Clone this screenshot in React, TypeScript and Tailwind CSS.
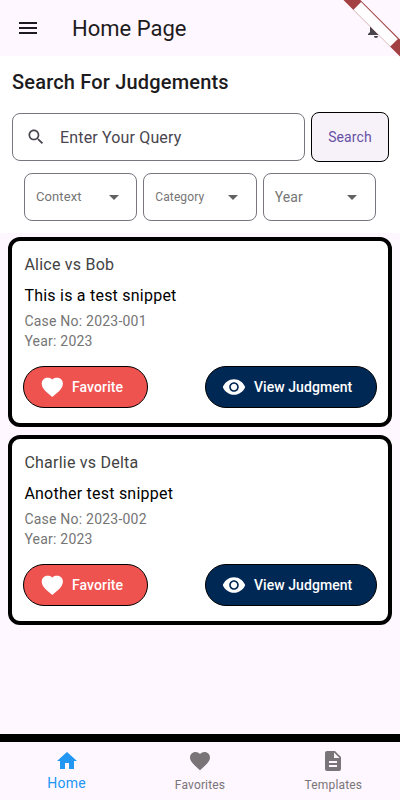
import React from "react";

const paths = {
  menu: "M3 18h18v-2H3v2zm0-5h18v-2H3v2zm0-7v2h18V6H3z",
  bell: "M12 22c1.1 0 2-.9 2-2h-4c0 1.1.89 2 2 2zm6-6v-5c0-3.07-1.64-5.64-4.5-6.32V4c0-.83-.67-1.5-1.5-1.5s-1.5.67-1.5 1.5v.68C7.63 5.36 6 7.92 6 11v5l-2 2v1h16v-1l-2-2z",
  search: "M15.5 14h-.79l-.28-.27C15.41 12.59 16 11.11 16 9.5 16 5.91 13.09 3 9.5 3S3 5.91 3 9.5 5.91 16 9.5 16c1.61 0 3.09-.59 4.23-1.57l.27.28v.79l5 4.99L20.49 19l-4.99-5zm-6 0C7.01 14 5 11.99 5 9.5S7.01 5 9.5 5 14 7.01 14 9.5 11.99 14 9.5 14z",
  caret: "M7 10l5 5 5-5z",
  heart: "M12 21.35l-1.45-1.32C5.4 15.36 2 12.28 2 8.5 2 5.42 4.42 3 7.5 3c1.74 0 3.41.81 4.5 2.09C13.09 3.81 14.76 3 16.5 3 19.58 3 22 5.42 22 8.5c0 3.78-3.4 6.86-8.55 11.54L12 21.35z",
  roundHeart: "M12.3 21.9C8 18.2 1.7 14.3 1.7 8.6C1.7 5.2 4.2 2.7 7.3 2.7C9.3 2.7 11.2 3.1 12.3 4.4C13.4 3.1 15.3 2.7 17.3 2.7C20.5 2.7 22.9 5.2 22.9 8.6C22.9 14.3 16.6 18.2 12.3 21.9z",
  eye: "M12 4.2C7 4.2 2.6 7.4.8 12c1.8 4.6 6.2 7.8 11.2 7.8s9.4-3.2 11.2-7.8C21.4 7.4 17 4.2 12 4.2zM12 16.800c-2.650 0-4.800-2.150-4.800-4.800s2.150-4.800 4.800-4.800 4.800 2.150 4.800 4.800-2.150 4.800-4.800 4.800zm0-8c-1.770 0-3.2 1.43-3.2 3.2s1.43 3.2 3.2 3.2 3.2-1.43 3.2-3.2-1.430-3.2-3.2-3.2z",
  home: "M10 20v-6h4v6h5v-8h3L12 3 2 12h3v8z",
  doc: "M14 2H6c-1.1 0-1.99.9-1.99 2L4 20c0 1.1.89 2 1.99 2H18c1.1 0 2-.9 2-2V8l-6-6zm2 16H8v-2h8v2zm0-4H8v-2h8v2zm-3-5V3.5L18.5 9H13z",
};

function Icon({ name, className }: { name: keyof typeof paths; className: string }) {
  return (
    <svg viewBox="0 0 24 24" fill="currentColor" className={`shrink-0 ${className}`}>
      <path d={paths[name]} />
    </svg>
  );
}

function Filter({ label, size }: { label: string; size: string }) {
  return (
    <div className="flex h-12 flex-1 items-center justify-between rounded-[8px] border border-[#79747e] pr-[10.5px] pl-[11px] text-[#757575]">
      <span className={size}>{label}</span>
      <Icon name="caret" className="size-6 text-[#616161]" />
    </div>
  );
}

function CaseCard({ title, snippet, no }: { title: string; snippet: string; no: string }) {
  return (
    <article className="h-[190px] rounded-[12px] border-4 border-black bg-white px-[11px] pt-[12px]">
      <h2 className="pl-[1.4px] text-[16px] leading-6 tracking-[0.23px] text-[#424242]">{title}</h2>
      <p className="mt-[7px] pl-[1.4px] text-[16px] leading-6 tracking-[0.23px] text-black">{snippet}</p>
      <p className="mt-[3px] pl-[1.4px] text-[14px] leading-5 tracking-[0.22px] text-[#757575]">Case No: {no}</p>
      <p className="pl-[1.4px] text-[14px] leading-5 tracking-[0.22px] text-[#757575]">Year: 2023</p>
      <div className="mt-[15px] flex justify-between">
        <button className="flex h-[42px] w-[124.5px] items-center rounded-full border border-black bg-[#ef5350] pl-[16px] text-[14px] font-medium tracking-[0.1px] text-white">
          <Icon name="roundHeart" className="size-6" />
          <span className="ml-2">Favorite</span>
        </button>
        <button className="flex h-[42px] w-[172.5px] items-center rounded-full border border-black bg-[#002855] pl-[16.5px] text-[14px] font-medium tracking-[0.06px] text-white">
          <Icon name="eye" className="size-6" />
          <span className="ml-2">View Judgment</span>
        </button>
      </div>
    </article>
  );
}

export default function App() {
  return (
    <div className="relative flex h-[800px] w-[400px] flex-col overflow-hidden bg-[#fef7ff] font-['Roboto',sans-serif] text-[#1d1b20]">
      <header className="flex h-14 items-center pr-[12px] pl-4">
        <Icon name="menu" className="size-6" />
        <h1 className="ml-8 flex-1 pt-px text-[22px] leading-7">Home Page</h1>
        <Icon name="bell" className="size-6 text-[#49454f]" />
      </header>
      <svg className="absolute top-0 right-0 size-[60px]" viewBox="0 0 60 60">
        <g transform="translate(60 0) rotate(45)">
          <rect x="-40" y="28" width="80" height="12" fill="#a34041" />
          <rect x="-26" y="29" width="52" height="10.8" fill="#fff" />
        </g>
      </svg>
      <section className="h-[177px] bg-white pt-3">
        <h2 className="pl-3 text-[20px] leading-7 font-medium tracking-[0.18px]">Search For Judgements</h2>
        <div className="mt-[16px] flex items-center pl-3">
          <div className="flex h-12 w-[292.5px] items-center rounded-[8px] border border-[#79747e] pl-[13.4px] text-[16px] tracking-[0.16px] text-[#49454f]">
            <Icon name="search" className="size-5" />
            <span className="ml-[13.6px] pt-[2px]">Enter Your Query</span>
          </div>
          <button className="ml-[6.5px] h-[50px] w-[78px] rounded-[8px] border border-black bg-[#f7f2fa] text-[14px] tracking-[0.1px] text-[#6750a4]">Search</button>
        </div>
        <div className="mt-[11px] flex gap-[6px] px-6">
          <Filter label="Context" size="text-[13px] tracking-[0.1px]" />
          <Filter label="Category" size="text-[12px] tracking-[0.1px]" />
          <Filter label="Year" size="text-[14px] tracking-[0.15px]" />
        </div>
      </section>
      <main className="flex flex-1 flex-col gap-2 px-2 pt-1">
        <CaseCard title="Alice vs Bob" snippet="This is a test snippet" no="2023-001" />
        <CaseCard title="Charlie vs Delta" snippet="Another test snippet" no="2023-002" />
      </main>
      <nav className="grid h-[66px] grid-cols-3 border-t-8 border-black text-[#797478]">
        <div className="flex flex-col items-center pt-[7px] text-[#2196f3]">
          <Icon name="home" className="size-6" />
          <span className="text-[14px] leading-5 tracking-[0.3px]">Home</span>
        </div>
        <div className="flex flex-col items-center pt-[7px]">
          <Icon name="heart" className="size-6" />
          <span className="mt-[3px] text-[12px] leading-[18px] tracking-[0.15px]">Favorites</span>
        </div>
        <div className="flex flex-col items-center pt-[7px]">
          <Icon name="doc" className="size-6" />
          <span className="mt-[3px] text-[12px] leading-[18px] tracking-[0.15px]">Templates</span>
        </div>
      </nav>
    </div>
  );
}
